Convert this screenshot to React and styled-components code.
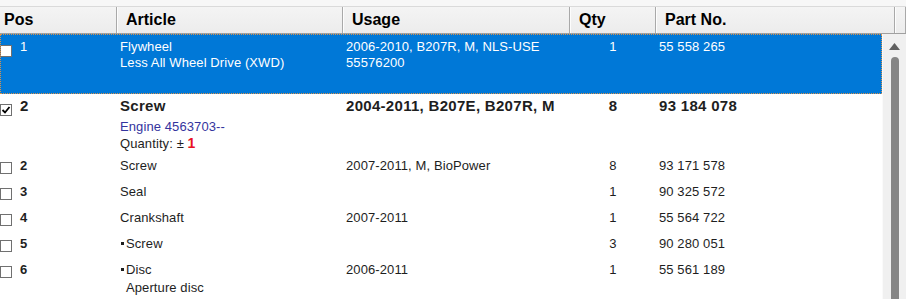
import styled, { createGlobalStyle } from 'styled-components';

const GlobalStyle = createGlobalStyle`
  html, body {
    margin: 0;
    padding: 0;
    background: #fff;
  }
  body {
    font-family: "Liberation Sans", Arial, sans-serif;
  }
`;

const Window = styled.div`
  width: 906px;
  height: 299px;
  overflow: hidden;
  display: flex;
  flex-direction: column;
  background: #fff;
`;

const TopStrip = styled.div`
  height: 6px;
  background: #f7f7f7;
  flex-shrink: 0;
`;

const HeaderBar = styled.div`
  display: grid;
  grid-template-columns: 117px 226px 227px 86px 239px 1fr;
  height: 28px;
  box-sizing: border-box;
  background: linear-gradient(#f4f4f4, #ececec);
  border-top: 1px solid #dadada;
  border-bottom: 1px solid #a0a0a0;
  flex-shrink: 0;
`;

const HeaderCell = styled.div`
  display: flex;
  align-items: center;
  padding-left: ${p => (p.$first ? 4 : 8)}px;
  border-right: 1px solid #a9a9a9;
  border-left: ${p => (p.$first ? 'none' : '1px solid #fdfdfd')};
  font-weight: bold;
  font-size: 16px;
  color: #000;
  box-sizing: border-box;
  white-space: nowrap;
  overflow: hidden;
`;

const Body = styled.div`
  display: flex;
  flex: 1;
  min-height: 0;
`;

const List = styled.div`
  flex: 1;
  display: flex;
  flex-direction: column;
`;

const Row = styled.div`
  display: grid;
  grid-template-columns: 117px 226px 227px 86px 1fr;
  align-items: start;
  min-height: ${p => p.$h}px;
  padding-top: ${p => p.$pad}px;
  box-sizing: border-box;
  background: ${p => (p.$selected ? '#0078d7' : 'transparent')};
  color: ${p => (p.$selected ? '#fff' : '#1e1e1e')};
  outline: ${p => (p.$selected ? '1px dotted #d8924c' : 'none')};
  outline-offset: -1px;
  font-size: 13px;
  line-height: 16px;
`;

const PosCell = styled.div`
  display: flex;
  align-items: flex-start;
  gap: 8px;
`;

const Cell = styled.div`
  padding-left: ${p => (p.$center ? 0 : 3)}px;
  text-align: ${p => (p.$center ? 'center' : 'left')};
  white-space: nowrap;
`;

const Line = styled.div`
  font-weight: ${p => (p.$bold || p.$big ? 'bold' : 'normal')};
  font-size: ${p => (p.$big ? 15 : 13)}px;
  line-height: ${p => (p.$big ? 20 : 16)}px;
  letter-spacing: ${p => (p.$big ? 0.3 : 0.1)}px;
  margin-top: ${p => p.$mt || 0}px;
  padding-left: ${p => p.$indent || 0}px;
  color: ${p => p.$color || 'inherit'};
`;

const Box = styled.div`
  width: 12px;
  height: 12px;
  box-sizing: border-box;
  border: 1px solid #707070;
  background: #fff;
  margin-top: ${p => p.$mt}px;
  flex-shrink: 0;
  display: flex;
  align-items: center;
  justify-content: center;
`;

const Bullet = styled.span`
  display: inline-block;
  width: 3px;
  height: 3px;
  background: #1e1e1e;
  margin: 0 2px 0 1px;
  vertical-align: 3px;
`;

const RedOne = styled.span`
  color: #e81123;
  font-weight: bold;
  font-size: 14px;
`;

const Scrollbar = styled.div`
  width: 23px;
  flex-shrink: 0;
  background: #f0f0f0;
  border-left: 1px solid #fafafa;
  display: flex;
  flex-direction: column;
  align-items: center;
  padding-top: 9px;
  gap: 7px;
`;

const Thumb = styled.div`
  width: 8px;
  flex: 1;
  background: #858585;
  border-radius: 4px 4px 0 0;
`;

function Check({ checked, mt }) {
  return (
    <Box $mt={mt}>
      {checked && (
        <svg width="10" height="10" viewBox="0 0 10 10">
          <polyline points="1.5,5 4,7.5 8.5,2" fill="none" stroke="#000" strokeWidth="1.8" />
        </svg>
      )}
    </Box>
  );
}

const rows = [
  { pos: '2', article: ['Screw'], usage: '2007-2011, M, BioPower', qty: '8', part: '93 171 578' },
  { pos: '3', article: ['Seal'], usage: '', qty: '1', part: '90 325 572' },
  { pos: '4', article: ['Crankshaft'], usage: '2007-2011', qty: '1', part: '55 564 722' },
  { pos: '5', article: ['Screw'], bullet: true, usage: '', qty: '3', part: '90 280 051' },
  { pos: '6', article: ['Disc', 'Aperture disc'], bullet: true, usage: '2006-2011', qty: '1', part: '55 561 189' },
];

export default function App() {
  return (
    <Window>
      <GlobalStyle />
      <TopStrip />
      <HeaderBar>
        <HeaderCell $first>Pos</HeaderCell>
        <HeaderCell>Article</HeaderCell>
        <HeaderCell>Usage</HeaderCell>
        <HeaderCell>Qty</HeaderCell>
        <HeaderCell>Part No.</HeaderCell>
        <HeaderCell />
      </HeaderBar>
      <Body>
        <List>
          <Row $selected $h={60} $pad={5}>
            <PosCell>
              <Check mt={6} />
              <Line>1</Line>
            </PosCell>
            <Cell>
              <Line>Flywheel</Line>
              <Line>Less All Wheel Drive (XWD)</Line>
            </Cell>
            <Cell>
              <Line>2006-2010, B207R, M, NLS-USE</Line>
              <Line>55576200</Line>
            </Cell>
            <Cell $center>
              <Line>1</Line>
            </Cell>
            <Cell>
              <Line>55 558 265</Line>
            </Cell>
          </Row>
          <Row $h={59} $pad={2}>
            <PosCell>
              <Check checked mt={8} />
              <Line $big>2</Line>
            </PosCell>
            <Cell>
              <Line $big>Screw</Line>
              <Line $mt={3} $color="#34349e">Engine 4563703--</Line>
              <Line>
                Quantity: ± <RedOne>1</RedOne>
              </Line>
            </Cell>
            <Cell>
              <Line $big>2004-2011, B207E, B207R, M</Line>
            </Cell>
            <Cell $center>
              <Line $big>8</Line>
            </Cell>
            <Cell>
              <Line $big>93 184 078</Line>
            </Cell>
          </Row>
          {rows.map((r, i) => (
            <Row key={i} $h={26} $pad={5}>
              <PosCell>
                <Check mt={4} />
                <Line $bold>{r.pos}</Line>
              </PosCell>
              <Cell>
                <Line>
                  {r.bullet && <Bullet />}
                  {r.article[0]}
                </Line>
                {r.article[1] && (
                  <Line $mt={2} $indent={6}>
                    {r.article[1]}
                  </Line>
                )}
              </Cell>
              <Cell>
                <Line>{r.usage}</Line>
              </Cell>
              <Cell $center>
                <Line>{r.qty}</Line>
              </Cell>
              <Cell>
                <Line>{r.part}</Line>
              </Cell>
            </Row>
          ))}
        </List>
        <Scrollbar>
          <svg width="11" height="7" viewBox="0 0 11 7">
            <polygon points="5.5,0 11,7 0,7" fill="#606060" />
          </svg>
          <Thumb />
        </Scrollbar>
      </Body>
    </Window>
  );
}
